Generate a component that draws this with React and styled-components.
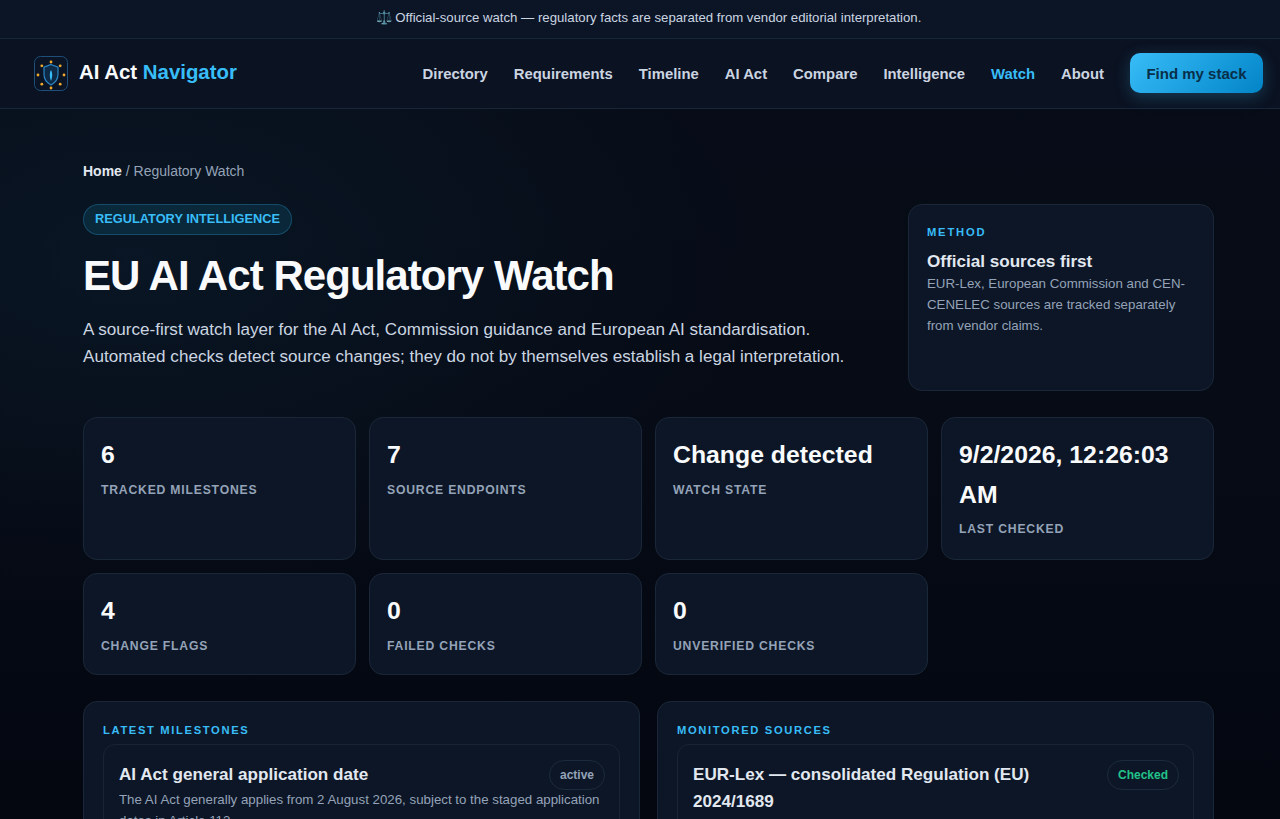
import styled, { createGlobalStyle } from "styled-components";

const GlobalStyle = createGlobalStyle`
  html, body {
    margin: 0;
    padding: 0;
    height: 819px;
    overflow: hidden;
    background: #050a14;
  }
  * {
    box-sizing: border-box;
  }
`;

const Page = styled.div`
  width: 1297px;
  min-height: 819px;
  font-family: "Liberation Sans", Arial, sans-serif;
  color: #e2e8f0;
  background:
    radial-gradient(900px 500px at 10% 30%, rgba(14, 40, 62, 0.35), transparent 70%),
    linear-gradient(180deg, #070d18 0%, #060b15 50%, #03060f 100%);
`;

const Notice = styled.div`
  height: 39px;
  padding-top: 10px;
  text-align: center;
  font-size: 13.2px;
  line-height: 16px;
  color: #cbd5e1;
  background: #0c1526;
  border-bottom: 1px solid #18263a;
`;

const Nav = styled.header`
  height: 70px;
  display: flex;
  align-items: center;
  justify-content: space-between;
  padding: 0 34px;
  background: #0b1221;
  border-bottom: 1px solid #18263a;
`;

const Brand = styled.a`
  display: flex;
  align-items: center;
  gap: 11px;
  font-size: 20.4px;
  line-height: 24px;
  font-weight: 700;
  color: #f8fafc;

  span {
    margin-top: -3px;
  }
`;

const BrandAccent = styled.em`
  font-style: normal;
  color: #38bdf8;
`;

const NavLinks = styled.nav`
  display: flex;
  align-items: center;
  gap: 26px;
`;

const NavLink = styled.a`
  font-size: 14.85px;
  font-weight: 700;
  color: ${({ $active }) => ($active ? "#38bdf8" : "#cbd5e1")};
`;

const CtaButton = styled.button`
  height: 40px;
  margin-top: -1px;
  padding: 0 16.5px;
  border: none;
  border-radius: 10px;
  font: 700 15px "Liberation Sans", Arial, sans-serif;
  color: #082f49;
  background: linear-gradient(135deg, #38bdf8, #0284c7);
  box-shadow: 0 4px 16px rgba(56, 189, 248, 0.25);
`;

const Main = styled.main`
  width: 1131px;
  margin: 0 auto;
  padding-top: 54px;
`;

const Breadcrumb = styled.div`
  font-size: 14px;
  line-height: 17px;
  color: #94a3b8;
  margin-bottom: 24px;

  strong {
    color: #e2e8f0;
  }
`;

const Hero = styled.section`
  display: grid;
  grid-template-columns: 1fr 306px;
  gap: 40px;
  margin-bottom: 26px;
`;

const Pill = styled.span`
  display: inline-block;
  padding: 6px 11px 8px;
  font-size: 12.8px;
  line-height: 15px;
  font-weight: 700;
  color: #38bdf8;
  background: rgba(14, 116, 144, 0.22);
  border: 1px solid rgba(56, 189, 248, 0.25);
  border-radius: 999px;
`;

const Title = styled.h1`
  margin: 14px 0 13px;
  font-size: 42px;
  line-height: 54px;
  font-weight: 700;
  letter-spacing: -0.95px;
  color: #f8fafc;
`;

const Lead = styled.p`
  margin: 0;
  font-size: 17.08px;
  line-height: 27px;
  color: #cbd5e1;
`;

const Card = styled.div`
  background: #0d1626;
  border: 1px solid #1a2738;
  border-radius: 14px;
`;

const MethodCard = styled(Card)`
  height: 187px;
  padding: 20px 18px;
`;

const Eyebrow = styled.div`
  font-size: 11.2px;
  line-height: 14px;
  font-weight: 700;
  letter-spacing: ${({ $wide }) => ($wide ? "1.8px" : "1.65px")};
  text-transform: uppercase;
  color: #38bdf8;
`;

const MethodTitle = styled.h3`
  margin: 11px 0 0;
  font-size: 17.1px;
  line-height: 24px;
  font-weight: 700;
  color: #e2e8f0;
`;

const MethodText = styled.p`
  margin: 0;
  font-size: 13.3px;
  line-height: 20.8px;
  color: #94a3b8;
`;

const StatsGrid = styled.section`
  display: grid;
  grid-template-columns: repeat(4, 273px);
  grid-template-rows: 143px 102px;
  gap: 13px;
  margin-bottom: 26px;
`;

const StatCard = styled(Card)`
  padding: 17px;
`;

const StatValue = styled.div`
  font-size: 24.8px;
  line-height: 39.7px;
  font-weight: 700;
  color: #f8fafc;
`;

const StatLabel = styled.div`
  margin-top: 6px;
  font-size: 12.2px;
  line-height: 19.5px;
  font-weight: 700;
  letter-spacing: 0.8px;
  text-transform: uppercase;
  color: #94a3b8;
`;

const Panels = styled.section`
  display: grid;
  grid-template-columns: 1fr 1fr;
  gap: 17px;
`;

const Panel = styled(Card)`
  padding: 21px 19px;
`;

const Item = styled.article`
  margin-top: 7px;
  padding: 16px 14px 15px 15px;
  background: #0d1626;
  border: 1px solid #182435;
  border-radius: 12px;
`;

const ItemHead = styled.div`
  display: flex;
  align-items: flex-start;
  justify-content: space-between;
  gap: 16px;
`;

const ItemTitle = styled.h4`
  margin: 0;
  font-size: 17.1px;
  line-height: 27px;
  font-weight: 700;
  color: #e2e8f0;
`;

const Status = styled.span`
  flex: none;
  margin-top: -1px;
  padding: 6.5px 10px;
  font-size: 12px;
  line-height: 15px;
  font-weight: 700;
  color: ${({ $ok }) => ($ok ? "#22c38a" : "#94a3b8")};
  border: 1px solid #1b2a3c;
  border-radius: 999px;
`;

const ItemText = styled.p`
  margin: 0;
  font-size: 13.3px;
  line-height: 20.8px;
  color: #94a3b8;
`;

const stats = [
  { value: "6", label: "Tracked milestones" },
  { value: "7", label: "Source endpoints" },
  { value: "Change detected", label: "Watch state" },
  { value: "9/2/2026, 12:26:03 AM", label: "Last checked" },
  { value: "4", label: "Change flags" },
  { value: "0", label: "Failed checks" },
  { value: "0", label: "Unverified checks" },
];

const navItems = ["Directory", "Requirements", "Timeline", "AI Act", "Compare", "Intelligence", "Watch", "About"];

function Logo() {
  const stars = Array.from({ length: 8 }, (_, i) => {
    const a = (i * Math.PI) / 4;
    return [17 + 13 * Math.sin(a), 19 - 13 * Math.cos(a)];
  });
  return (
    <svg width="34" height="35" viewBox="0 0 34 35" fill="none">
      <rect x="0.5" y="0.5" width="33" height="34" rx="6" fill="#0a1424" stroke="#1d4f7a" />
      {stars.map(([x, y], i) => (
        <circle key={i} cx={x} cy={y} r="1.4" fill="#f0a92b" />
      ))}
      <path d="M17 8.5l7 2.6v7.2c0 4.8-3 8.600-7 10.700-4-2.100-7-5.900-7-10.700v-7.200z" fill="#0e2a47" stroke="#2a86c4" strokeWidth="1.2" />
      <path d="M17 14c.9 1.700 1.200 3.400 1.200 5.200S17.800 23 17 25c-.8-2-1.200-3.900-1.200-5.800S16.100 15.700 17 14z" fill="#38bdf8" />
    </svg>
  );
}

export default function App() {
  return (
    <Page>
      <GlobalStyle />
      <Notice>⚖️ Official-source watch — regulatory facts are separated from vendor editorial interpretation.</Notice>
      <Nav>
        <Brand>
          <Logo />
          <span>
            AI Act <BrandAccent>Navigator</BrandAccent>
          </span>
        </Brand>
        <NavLinks>
          {navItems.map((item) => (
            <NavLink key={item} $active={item === "Watch"}>
              {item}
            </NavLink>
          ))}
          <CtaButton>Find my stack</CtaButton>
        </NavLinks>
      </Nav>
      <Main>
        <Breadcrumb>
          <strong>Home</strong> / Regulatory Watch
        </Breadcrumb>
        <Hero>
          <div>
            <Pill>REGULATORY INTELLIGENCE</Pill>
            <Title>EU AI Act Regulatory Watch</Title>
            <Lead>
              A source-first watch layer for the AI Act, Commission guidance and European AI standardisation.
              Automated checks detect source changes; they do not by themselves establish a legal interpretation.
            </Lead>
          </div>
          <MethodCard>
            <Eyebrow $wide>Method</Eyebrow>
            <MethodTitle>Official sources first</MethodTitle>
            <MethodText>
              EUR-Lex, European Commission and CEN-CENELEC sources are tracked separately from vendor claims.
            </MethodText>
          </MethodCard>
        </Hero>
        <StatsGrid>
          {stats.map((stat) => (
            <StatCard key={stat.label}>
              <StatValue>{stat.value}</StatValue>
              <StatLabel>{stat.label}</StatLabel>
            </StatCard>
          ))}
        </StatsGrid>
        <Panels>
          <Panel>
            <Eyebrow>Latest milestones</Eyebrow>
            <Item>
              <ItemHead>
                <ItemTitle>AI Act general application date</ItemTitle>
                <Status>active</Status>
              </ItemHead>
              <ItemText>
                The AI Act generally applies from 2 August 2026, subject to the staged application dates in Article 113.
              </ItemText>
            </Item>
          </Panel>
          <Panel>
            <Eyebrow>Monitored sources</Eyebrow>
            <Item>
              <ItemHead>
                <ItemTitle>EUR-Lex — consolidated Regulation (EU) 2024/1689</ItemTitle>
                <Status $ok>Checked</Status>
              </ItemHead>
            </Item>
          </Panel>
        </Panels>
      </Main>
    </Page>
  );
}
